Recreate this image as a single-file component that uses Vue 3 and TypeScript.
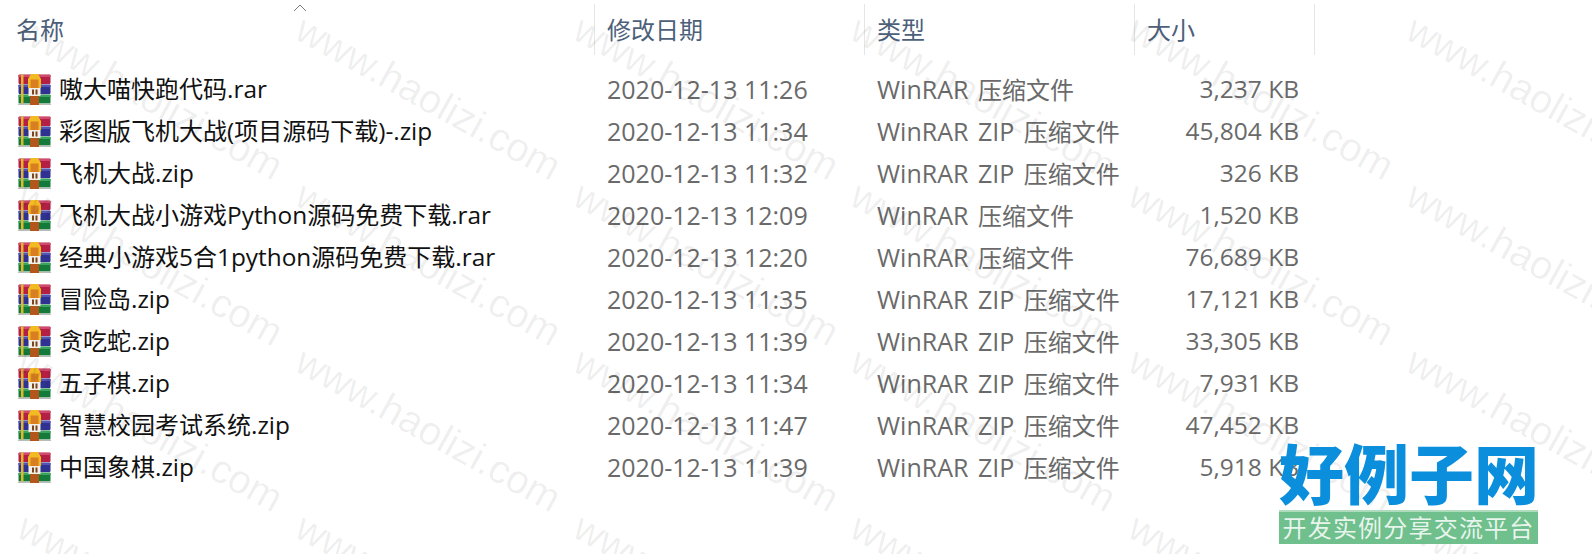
<script setup lang="ts">
interface FileRow { name: string; date: string; type: string; size: string }
const RAR = 'WinRAR 压缩文件'
const ZIP = 'WinRAR ZIP 压缩文件'
const rows: FileRow[] = [
  { name: '嗷大喵快跑代码.rar', date: '2020-12-13 11:26', type: RAR, size: '3,237 KB' },
  { name: '彩图版飞机大战(项目源码下载)-.zip', date: '2020-12-13 11:34', type: ZIP, size: '45,804 KB' },
  { name: '飞机大战.zip', date: '2020-12-13 11:32', type: ZIP, size: '326 KB' },
  { name: '飞机大战小游戏Python源码免费下载.rar', date: '2020-12-13 12:09', type: RAR, size: '1,520 KB' },
  { name: '经典小游戏5合1python源码免费下载.rar', date: '2020-12-13 12:20', type: RAR, size: '76,689 KB' },
  { name: '冒险岛.zip', date: '2020-12-13 11:35', type: ZIP, size: '17,121 KB' },
  { name: '贪吃蛇.zip', date: '2020-12-13 11:39', type: ZIP, size: '33,305 KB' },
  { name: '五子棋.zip', date: '2020-12-13 11:34', type: ZIP, size: '7,931 KB' },
  { name: '智慧校园考试系统.zip', date: '2020-12-13 11:47', type: ZIP, size: '47,452 KB' },
  { name: '中国象棋.zip', date: '2020-12-13 11:39', type: ZIP, size: '5,918 KB' },
]
function parts(text: string): { t: string; cjk: boolean }[] {
  return (text.match(/[\u3400-\u9fff]+|[^\u3400-\u9fff]+/g) ?? []).map((t) => ({
    t,
    cjk: /[\u3400-\u9fff]/.test(t),
  }))
}
const marks: { x: number; y: number }[] = []
for (const y of [8, 174, 340, 506]) {
  for (const x of [31, 309, 587, 864, 1142, 1420]) marks.push({ x, y })
}
</script>

<template>
  <div class="page">
    <div class="grid head">
      <div class="hcell first"><span class="cjk">名称</span></div>
      <div class="hcell"><span class="cjk">修改日期</span></div>
      <div class="hcell"><span class="cjk">类型</span></div>
      <div class="hcell"><span class="cjk">大小</span></div>
    </div>
    <svg class="chevron" width="14" height="8" viewBox="0 0 14 8">
      <path d="M1 7 L7 1 L13 7" fill="none" stroke="#7a7a7a" stroke-width="1" />
    </svg>

    <div class="list">
      <div v-for="r in rows" :key="r.name" class="grid row">
        <div class="cell name">
          <svg class="icon" width="33" height="31" viewBox="0 0 33 31">
            <rect x="0.5" y="0.5" width="32" height="9.5" rx="1" fill="#b31f45" />
            <rect x="0.5" y="1" width="32" height="2" fill="#cf4a6c" />
            <rect x="0.5" y="10.5" width="32" height="9.5" rx="1" fill="#2f3290" />
            <rect x="0.5" y="11" width="32" height="2" fill="#5454b4" />
            <rect x="0.5" y="20.5" width="32" height="9" rx="1" fill="#137a3a" />
            <rect x="0.5" y="21" width="32" height="2" fill="#3aa45e" />
            <rect x="3" y="0.5" width="2.5" height="29" fill="#e2b82a" />
            <rect x="0" y="29.5" width="33" height="1.5" fill="#b9bdb9" />
            <path d="M13 0 H20 L23 5 V14 H10 V5 Z" fill="#f2bb22" />
            <rect x="12.5" y="5.5" width="8" height="8.5" fill="#d97f22" />
            <rect x="10.5" y="14" width="12" height="8" fill="#f2efe6" />
            <rect x="14" y="15.5" width="2" height="5" fill="#7a4420" />
            <rect x="17.5" y="15.5" width="2" height="5" fill="#7a4420" />
            <rect x="12" y="22" width="9" height="9" fill="#b2561c" />
          </svg>
          <span class="label"><span v-for="(p, i) in parts(r.name)" :key="i" :class="{ cjk: p.cjk }">{{ p.t }}</span></span>
        </div>
        <div class="cell muted"><span class="label">{{ r.date }}</span></div>
        <div class="cell muted type"><span class="label"><span v-for="(p, i) in parts(r.type)" :key="i" :class="{ cjk: p.cjk }">{{ p.t }}</span></span></div>
        <div class="cell muted size"><span class="label">{{ r.size }}</span></div>
      </div>
    </div>

    <div class="marks">
      <span v-for="(m, i) in marks" :key="i" class="mark" :style="{ left: m.x + 'px', top: m.y + 'px' }">www.haolizi.com</span>
    </div>

    <div class="logo">
      <div class="logo-title">好例子网</div>
      <div class="logo-sub">开发实例分享交流平台</div>
    </div>
  </div>
</template>

<style scoped>
.page {
  position: relative;
  width: 1592px;
  height: 554px;
  overflow: hidden;
  background: #fff;
  font-family: "Open Sans", "Noto Sans CJK SC", sans-serif;
  font-size: 25px;
}
.cjk {
  font-family: "Noto Sans CJK SC", sans-serif;
  font-size: 24px;
}
.grid {
  display: grid;
  grid-template-columns: 595px 270px 270px 180px;
}
.head {
  height: 55px;
  padding-top: 4px;
  box-sizing: border-box;
}
.hcell {
  display: flex;
  align-items: center;
  padding-left: 12px;
  padding-bottom: 2px;
  border-right: 1px solid #e5e5e5;
  color: #4c607a;
  box-sizing: border-box;
}
.hcell.first {
  padding-left: 16px;
}
.chevron {
  position: absolute;
  left: 293px;
  top: 4px;
}
.list {
  padding-top: 13px;
}
.row {
  height: 42px;
}
.cell {
  display: flex;
  align-items: center;
  padding-left: 12px;
  white-space: nowrap;
  line-height: 40px;
}
.name {
  padding-left: 18px;
  color: #111;
  font-size: 24.4px;
}
.icon {
  flex: none;
  margin-right: 8px;
}
.label {
  padding-bottom: 2px;
}
.muted {
  color: #6a6a6a;
}
.type {
  word-spacing: 3px;
}
.size {
  justify-content: flex-end;
  padding-right: 16px;
  font-size: 24.5px;
}
.marks {
  position: absolute;
  inset: 0;
  pointer-events: none;
}
.mark {
  position: absolute;
  font-family: "Liberation Sans", sans-serif;
  font-size: 40px;
  line-height: 1;
  color: rgba(0, 0, 0, 0.065);
  white-space: nowrap;
  transform-origin: 0 0;
  transform: rotate(29deg);
}
.logo {
  position: absolute;
  left: 1279px;
  top: 435px;
  width: 259px;
}
.logo-title {
  font-family: "Noto Sans CJK SC", sans-serif;
  font-weight: 900;
  font-size: 65px;
  line-height: 72px;
  height: 75px;
  color: #0b8fdc;
  white-space: nowrap;
  text-align: center;
}
.logo-sub {
  background: rgba(100, 187, 131, 0.92);
  border-top: 2px solid #aedcbd;
  height: 32px;
  color: rgba(255, 255, 255, 0.85);
  font-family: "Noto Sans CJK SC", sans-serif;
  font-size: 24px;
  line-height: 30px;
  letter-spacing: 1.2px;
  text-align: center;
  white-space: nowrap;
}
</style>
